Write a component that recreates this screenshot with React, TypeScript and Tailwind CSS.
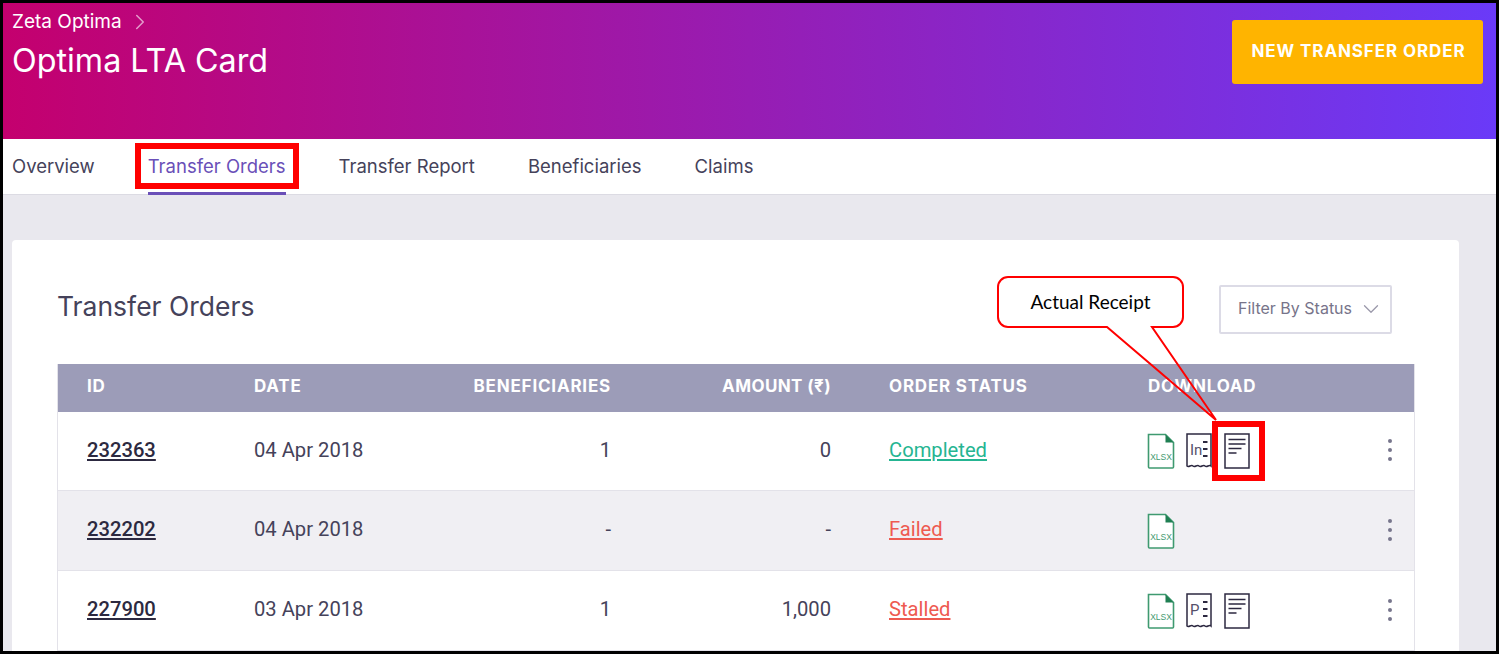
import React from 'react';
import { ChevronDown, ChevronRight } from 'lucide-react';

const rowGrid = 'grid grid-cols-[196px_197px_160px_220px_317px_1fr_48px] items-center';

const XlsxIcon = () => (
  <svg width="28" height="36" viewBox="0 0 28 36" fill="none" className="shrink-0">
    <path d="M1.500 1.500h17l8 8v24.500a1 1 0 0 1-1 1H2.500a1 1 0 0 1-1-1z" stroke="#3f9a70" strokeWidth="1.600" fill="#fff" />
    <path d="M18.500 1.500l8 8h-8z" fill="#1f7f52" />
    <text x="14" y="27" textAnchor="middle" fontSize="8.500" fontFamily="'Liberation Sans',sans-serif" fill="#3f9a70">XLSX</text>
  </svg>
);

const InvoiceIcon = ({ letter }: { letter: string }) => (
  <svg width="26" height="36" viewBox="0 0 26 36" fill="none" className="shrink-0">
    <path d="M1 1h24v32c-2-2-4 2-6 0s-4 2-6 0-4 2-6 0-4 2-6 0z" stroke="#2c2840" strokeWidth="1.500" fill="#fff" />
    <text x="4" y="22" fontSize="15" fontFamily="'Roboto',sans-serif" fill="#55516a">{letter}</text>
    <path d="M17 9h4.500M17 16h4.500M17 23h4.500" stroke="#2c2840" strokeWidth="1.800" />
  </svg>
);

const ReceiptIcon = () => (
  <svg width="26" height="36" viewBox="0 0 26 36" fill="none" className="shrink-0">
    <rect x="1" y="1" width="24" height="34" stroke="#2c2840" strokeWidth="1.500" fill="#fff" />
    <path d="M4.500 6.500h17M4.500 11h17M4.500 15.500h13M4.500 20h8" stroke="#2c2840" strokeWidth="1.600" />
  </svg>
);

const KebabDots = () => (
  <div className="flex flex-col items-center gap-[5px]">
    <span className="w-1 h-1 rounded-full bg-[#77758c]" />
    <span className="w-1 h-1 rounded-full bg-[#77758c]" />
    <span className="w-1 h-1 rounded-full bg-[#77758c]" />
  </div>
);

interface OrderRow {
  id: string;
  date: string;
  beneficiaries: string;
  amount: string;
  status: string;
  statusClass: string;
  invoice?: string;
  receipt?: boolean;
  rowClass: string;
}

const rows: OrderRow[] = [
  { id: '232363', date: '04 Apr 2018', beneficiaries: '1', amount: '0', status: 'Completed', statusClass: 'text-[#25b592]', invoice: 'In', receipt: true, rowClass: 'bg-white h-[79px]' },
  { id: '232202', date: '04 Apr 2018', beneficiaries: '-', amount: '-', status: 'Failed', statusClass: 'text-[#ee5a50]', rowClass: 'bg-[#f0eff3] h-[80px]' },
  { id: '227900', date: '03 Apr 2018', beneficiaries: '1', amount: '1,000', status: 'Stalled', statusClass: 'text-[#ee5a50]', invoice: 'P', receipt: true, rowClass: 'bg-white h-[80px]' },
];

const tabs = ['Overview', 'Transfer Orders', 'Transfer Report', 'Beneficiaries', 'Claims'];

export default function App() {
  return (
    <div className="relative w-[1499px] h-[654px] overflow-hidden border-[3px] border-black bg-[#e9e8ee] font-['Inter','Noto_Sans',sans-serif]">
      {/* Header */}
      <div className="h-[136px] bg-linear-to-r/srgb from-[#c4006e] to-[#6a3af8] flex justify-between items-start pl-[9px] pr-[13px]">
        <div className="pt-[6px]">
          <div className="flex items-center gap-[5px] text-white text-[19px] leading-[24px]">
            Zeta Optima
            <ChevronRight size={26} strokeWidth={1.400} className="text-[#e39ccb]" />
          </div>
          <div className="text-white text-[32.300px] leading-[40px] mt-[6px]">Optima LTA Card</div>
        </div>
        <button className="mt-[17px] w-[251px] h-[64px] pl-[2px] rounded-[3px] bg-[#ffb400] text-white text-[17px] font-bold tracking-[0.9px]">
          NEW TRANSFER ORDER
        </button>
      </div>

      {/* Tabs */}
      <div className="h-[56px] bg-white border-b border-[#dcdbe3] flex items-start pl-[9px] gap-[53px]">
        {tabs.map((t) => (
          <div
            key={t}
            className={`h-[56px] pt-[15px] text-[18.500px] leading-[24px] ${
              t === 'Transfer Orders' ? 'text-[#6a4fb8] border-b-[3px] border-[#6a4fb8]' : 'text-[#45425a]'
            }`}
          >
            {t}
          </div>
        ))}
      </div>

      {/* Card */}
      <div className="px-[9px] pt-[45px]">
        <div className="w-[1447px] h-[420px] rounded-[4px] bg-white pt-[45px] px-[45px]">
          <div className="flex justify-between items-center h-[48px] pr-[22px]">
            <h2 className="text-[26.500px] font-normal text-[#45425a] -mt-[4px]">Transfer Orders</h2>
            <div className="w-[173px] h-[49px] pb-[2px] rounded-[2px] border-2 border-[#dcdbe6] flex items-center justify-between pl-[17px] pr-[6px] text-[16px] text-[#77748a]">
              Filter By Status
              <ChevronDown size={26} strokeWidth={1.200} className="text-[#9b99ab] mt-[2px]" />
            </div>
          </div>

          <div className="mt-[31px] w-[1358px] border-x border-[#e3e2e9]">
            <div className={`${rowGrid} h-[48px] pb-[2px] bg-[#9c9cb8] text-white text-[17px] font-bold tracking-[0.8px]`}>
              <div className="pl-[29px]">ID</div>
              <div>DATE</div>
              <div className="text-right">BENEFICIARIES</div>
              <div className="text-right tracking-[0.4px]">AMOUNT (₹)</div>
              <div className="pl-[58px]">ORDER STATUS</div>
              <div>DOWNLOAD</div>
              <div />
            </div>
            {rows.map((r) => (
              <div key={r.id} className={`${rowGrid} ${r.rowClass} pb-[2px] border-b border-[#e3e2e9] text-[20.200px] text-[#45425a] font-['Roboto',sans-serif]`}>
                <div className="pl-[29px] font-medium underline text-[#2c2940]">{r.id}</div>
                <div>{r.date}</div>
                <div className="text-right">{r.beneficiaries}</div>
                <div className="text-right">{r.amount}</div>
                <div className={`pl-[58px] underline ${r.statusClass}`}>{r.status}</div>
                <div className="flex items-center -ml-[1px] pt-[2px]">
                  <XlsxIcon />
                  {r.invoice && <div className="ml-[11px]"><InvoiceIcon letter={r.invoice} /></div>}
                  {r.receipt && <div className="ml-[12px]"><ReceiptIcon /></div>}
                </div>
                <KebabDots />
              </div>
            ))}
          </div>
        </div>
      </div>

      {/* Annotations drawn over the page */}
      <div className="absolute left-[132px] top-[140px] w-[164px] h-[46px] border-[6px] border-[#ff0000]" />
      <div className="absolute left-[1209px] top-[418px] w-[53px] h-[60px] border-[6px] border-[#ff0000]" />
      <svg className="absolute left-[987px] top-[267px]" width="240" height="160" viewBox="0 0 240 160" fill="none">
        <path
          d="M18 7h165a10 10 0 0 1 10 10v30a10 10 0 0 1-10 10h-21l64 93L117 57H18a10 10 0 0 1-10-10V17a10 10 0 0 1 10-10z"
          fill="none"
          stroke="#ff0000"
          strokeWidth="2"
        />
      </svg>
      <div className="absolute left-[995px] top-[274px] w-[185px] h-[50px] flex items-center justify-center text-[19px] text-black font-['Lato',sans-serif]">
        Actual Receipt
      </div>
    </div>
  );
}
